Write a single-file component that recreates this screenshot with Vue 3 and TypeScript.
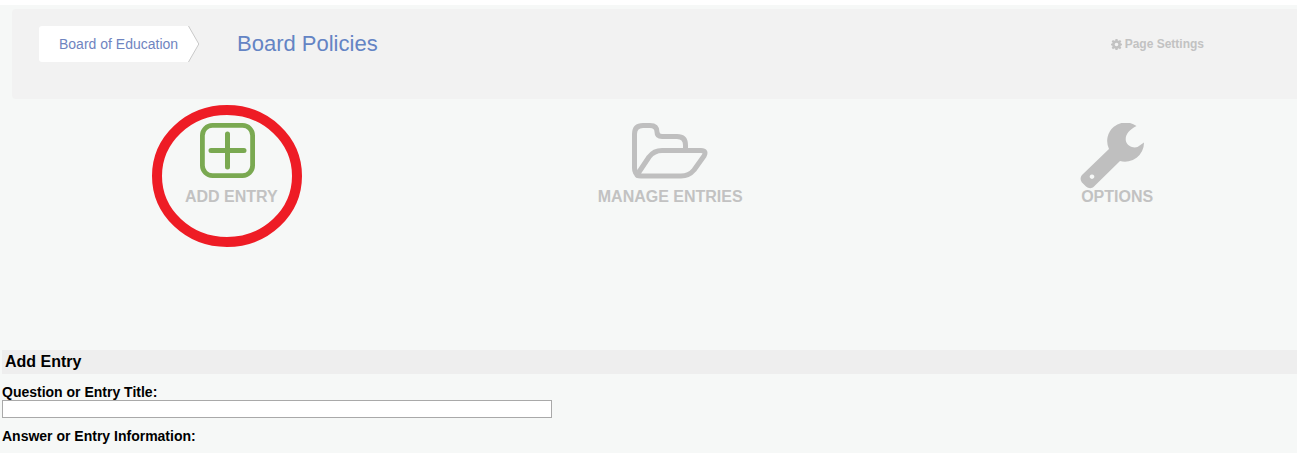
<script setup lang="ts">
const title: string = 'Board Policies'
</script>

<template>
  <div class="page">
    <header class="panel">
      <a class="crumb">Board of Education</a>
      <svg class="chev" width="12" height="36" viewBox="0 0 12 36">
        <path d="M0 0 L11 18 L0 36 Z" fill="#fff" />
        <path d="M0.5 0 L10.8 18 L0.5 36" fill="none" stroke="#c9c9c9" stroke-width="1" />
      </svg>
      <h1 class="title">{{ title }}</h1>
      <div class="settings">
        <svg width="11" height="11" viewBox="0 0 12 12">
          <path fill="#c2c2c2" fill-rule="evenodd" d="M4.9 0h2.2l.3 1.6 1 .4L9.8 1l1.5 1.5-1 1.4.4 1 1.3.3v1.700l-1.300.3-.4 1 1 1.400L9.800 11.100 8.400 10.100l-1 .4L7.100 12H4.900l-.3-1.500-1-.4-1.400 1L.7 9.600l1-1.400-.4-1L0 6.900V5.200l1.300-.3.4-1-1-1.400L2.200 1l1.400 1 1-.4zM6 4a2 2 0 1 0 0 4 2 2 0 0 0 0-4z" />
        </svg>
        <span>Page Settings</span>
      </div>
    </header>

    <nav class="tabs">
      <div class="tab tab-add">
        <svg class="icon shift" width="55" height="55" viewBox="0 0 55 55">
          <rect x="2.400" y="2.400" width="50.200" height="50.200" rx="10" fill="none" stroke="#7aa951" stroke-width="4.800" />
          <path d="M11 27.500H44M27.500 11V44" fill="none" stroke="#7aa951" stroke-width="5" stroke-linecap="round" />
        </svg>
        <span class="label">ADD ENTRY</span>
        <svg class="ring" width="152" height="143" viewBox="0 0 152 143">
          <ellipse cx="76" cy="71" rx="70" ry="66" fill="none" stroke="#ee1c25" stroke-width="10" />
        </svg>
      </div>
      <div class="tab tab-manage">
        <svg class="icon" width="76" height="56" viewBox="0 0 76 56">
          <g fill="none" stroke="#bfbfbf" stroke-width="5" stroke-linejoin="round" stroke-linecap="round">
            <path d="M6 52 Q2.500 50 2.500 45 V11 Q2.500 2.500 11 2.500 H18 Q25 2.500 25 9 Q25 13.500 30 13.500 H45 Q53.500 13.500 53.500 22 V26" />
            <path d="M5 52 L17 34 Q22 27.500 30 27.500 H69 Q75 27.500 72 33 L62 47 Q57 53 49 53 H9 Q5 53 5 52 Z" />
          </g>
        </svg>
        <span class="label">MANAGE ENTRIES</span>
      </div>
      <div class="tab tab-options">
        <svg class="icon shift-wrench" width="67" height="67" viewBox="0 0 67 67">
          <path fill="#bfbfbf" fill-rule="evenodd" d="M57.500 3 A18.500 18.500 0 0 0 30 26 L3.500 51.500 C.5 54.500 1.500 58 3.500 60 L7 63.500 C10 66 13 65.500 15 63.500 L41 38 A19 19 0 0 0 65 19.500 L58.500 24 C54 25.500 48.500 23 47 18.500 C45.500 12 50 7 57.500 3 Z M13 51.400 a2.300 2.300 0 1 0 .01 0 Z" />
        </svg>
        <span class="label">OPTIONS</span>
      </div>
    </nav>

    <section class="form">
      <h2 class="form-head">Add Entry</h2>
      <label class="field-label" for="entry-title">Question or Entry Title:</label>
      <input id="entry-title" class="field" type="text" />
      <label class="field-label second">Answer or Entry Information:</label>
    </section>
  </div>
</template>

<style>
html, body { margin: 0; background: #fff; }
</style>

<style scoped>
.page {
  box-sizing: border-box;
  height: 453px;
  border-top: 5px solid #fff;
  background: #f6f8f7;
  font-family: "Liberation Sans", Arial, sans-serif;
  overflow: hidden;
}
.panel {
  box-sizing: border-box;
  display: flex;
  align-items: flex-start;
  height: 90px;
  margin: 4px 0 0 12px;
  padding: 17px 93px 0 27px;
  background: #f2f2f2;
  border-radius: 4px 0 0 4px;
}
.crumb {
  box-sizing: border-box;
  width: 149px;
  height: 36px;
  padding-left: 20px;
  background: #fff;
  border-radius: 3px 0 0 3px;
  color: #6f84c0;
  font-size: 14px;
  line-height: 36px;
}
.chev { flex: none; }
.title {
  margin: 0 0 0 37px;
  color: #6484c4;
  font-size: 22px;
  font-weight: 400;
  line-height: 36px;
}
.settings {
  display: flex;
  align-items: center;
  gap: 3px;
  height: 36px;
  margin-left: auto;
  color: #c2c2c2;
  font-size: 12px;
  font-weight: 700;
}
.tabs {
  display: flex;
  align-items: flex-start;
  box-sizing: border-box;
  height: 251px;
  padding-top: 24px;
}
.tab {
  position: relative;
  display: flex;
  flex-direction: column;
  align-items: center;
}
.tab-add { margin-left: 185px; }
.tab-manage { margin-left: 320px; }
.tab-options { margin-left: 336px; }
.icon { display: block; flex: none; }
.shift { margin-right: 8px; }
.shift-wrench { margin-right: 8px; }
.tab-add .label { margin-top: 10px; }
.tab-manage .label { margin-top: 9px; }
.tab-options .label { margin: -2px 0 0 2px; }
.label {
  color: #c2c2c2;
  font-size: 16px;
  font-weight: 700;
  line-height: 18px;
  white-space: nowrap;
}
.ring {
  position: absolute;
  left: -34px;
  top: -18px;
  pointer-events: none;
}
.form-head {
  box-sizing: border-box;
  height: 24px;
  margin: 0 0 0 2px;
  padding-left: 3px;
  background: #eeeeee;
  color: #000;
  font-size: 16px;
  font-weight: 700;
  line-height: 24px;
}
.field-label {
  display: block;
  margin: 10px 0 0 2px;
  color: #000;
  font-size: 14px;
  font-weight: 700;
  line-height: 16px;
}
.field {
  display: block;
  box-sizing: border-box;
  width: 550px;
  height: 18px;
  margin: 0 0 0 2px;
  padding: 0;
  background: #fff;
  border: 1px solid #a9a9a9;
  border-radius: 0;
}
.second { margin-top: 10px; }
</style>
